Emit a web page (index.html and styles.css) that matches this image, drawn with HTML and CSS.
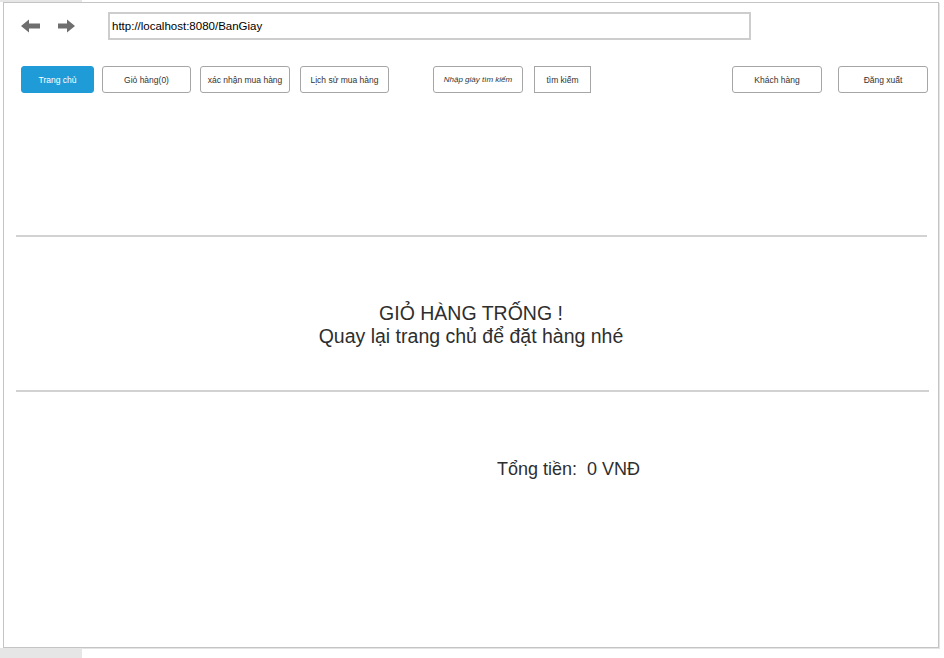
FILE: index.html
```html
<!DOCTYPE html>
<html lang="vi">
<head>
<meta charset="utf-8">
<title>BanGiay - Giỏ hàng</title>
<link rel="stylesheet" href="styles.css">
</head>
<body>
<div class="top-strip"></div>
<div class="frame">
  <div class="toolbar">
    <svg class="arrow arrow-back" width="19" height="16" viewBox="0 0 19 16"><path d="M0 8 L8 1.5 L8 5.5 L19 5.5 L19 10.5 L8 10.5 L8 14.5 Z" fill="#6e6e6e"/></svg>
    <svg class="arrow arrow-fwd" width="17" height="16" viewBox="0 0 17 16"><path d="M17 8 L9 1.5 L9 5.5 L0 5.5 L0 10.5 L9 10.5 L9 14.5 Z" fill="#6e6e6e"/></svg>
    <div class="address">http://localhost:8080/BanGiay</div>
  </div>
  <div class="nav">
    <div class="btn btn-primary w-home">Trang chủ</div>
    <div class="btn w-cart">Giỏ hàng(0)</div>
    <div class="btn w-confirm">xác nhận mua hàng</div>
    <div class="btn w-history">Lịch sử mua hàng</div>
    <div class="btn btn-input w-search-input">Nhập giày tìm kiếm</div>
    <div class="btn btn-square w-search">tìm kiếm</div>
    <div class="btn w-customer">Khách hàng</div>
    <div class="btn w-logout">Đăng xuất</div>
  </div>
  <div class="rule rule-top"></div>
  <div class="message">
    <div>GIỎ HÀNG TRỐNG !</div>
    <div>Quay lại trang chủ để đặt hàng nhé</div>
  </div>
  <div class="rule rule-bottom"></div>
  <div class="total">Tổng tiền:&nbsp; 0 VNĐ</div>
</div>
<div class="bottom-strip"></div>
</body>
</html>
```
FILE: styles.css
```css
html, body {
  margin: 0;
  padding: 0;
  background: #ffffff;
  font-family: "Liberation Sans", Arial, sans-serif;
  color: #333333;
}

.top-strip {
  width: 82px;
  height: 2px;
  background: #e6e6e6;
}

.bottom-strip {
  width: 82px;
  height: 10px;
  background: #e6e6e6;
}

.frame {
  margin-left: 3px;
  width: 934px;
  height: 644px;
  border: 1px solid #c4c4c4;
  box-shadow: 1px 1px 0 #e4e4e4;
  background: #ffffff;
  display: flex;
  flex-direction: column;
}

.toolbar {
  display: flex;
  align-items: center;
  padding: 9px 0 0 17px;
}

.arrow {
  display: block;
  flex: none;
}

.arrow-back {
  margin-right: 18px;
}

.arrow-fwd {
  margin-right: 33px;
}

.address {
  box-sizing: border-box;
  width: 643px;
  height: 28px;
  border: 2px solid #cdcdcd;
  padding-left: 2px;
  font-size: 11.5px;
  line-height: 24px;
  color: #000000;
}

.nav {
  display: flex;
  align-items: center;
  margin-top: 26px;
  padding: 0 10px 0 17px;
}

.btn {
  box-sizing: border-box;
  height: 27px;
  border: 1px solid #a6a6a6;
  border-radius: 3px;
  font-size: 8.5px;
  line-height: 26px;
  text-align: center;
  color: #333333;
  white-space: nowrap;
  flex: none;
}

.btn-primary {
  background: #1f9cd8;
  border-color: #1f9cd8;
  color: #ffffff;
}

.btn-input {
  font-style: italic;
  font-size: 8px;
}

.btn-square {
  border-radius: 0;
}

.w-home { width: 73px; }
.w-cart { width: 89px; margin-left: 8px; }
.w-confirm { width: 90px; margin-left: 9px; }
.w-history { width: 89px; margin-left: 10px; }
.w-search-input { width: 90px; margin-left: 44px; }
.w-search { width: 57px; margin-left: 11px; }
.w-customer { width: 90px; margin-left: auto; }
.w-logout { width: 90px; margin-left: 16px; }

.rule {
  height: 2px;
  background: #d2d2d2;
}

.rule-top {
  margin: 142px 11px 0 12px;
}

.rule-bottom {
  margin: 42px 9px 0 12px;
}

.message {
  padding-top: 65px;
  text-align: center;
  font-size: 19.5px;
  line-height: 23px;
  color: #2e2e2e;
}

.total {
  margin-top: 67px;
  padding-left: 493px;
  font-size: 18px;
  color: #2e2e2e;
}
```
